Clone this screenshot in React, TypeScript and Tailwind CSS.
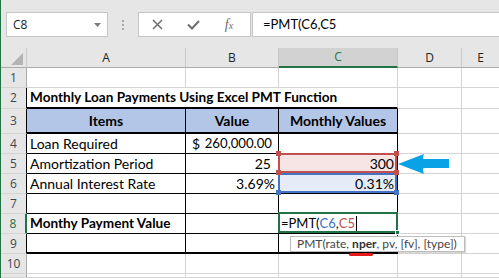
import React from "react";

type CP = { w: string; cls?: string; children?: React.ReactNode };
const Cell = ({ w, cls = "", children }: CP) => (
  <div className={`${w} shrink-0 h-full flex items-center overflow-visible whitespace-nowrap relative ${cls}`}>{children}</div>
);

const GRID = "border-r border-b border-r-[#d4d4d4] border-b-[#d4d4d4]";
const TBL = "border-r border-b border-r-black border-b-black";
const TBL2 = "border-r border-b-2 border-r-black border-b-black";

const RH = ({ n, cls = "" }: { n: string; cls?: string }) => (
  <div
    className={`w-[26px] shrink-0 h-full flex items-center justify-center bg-[#e6e6e6] border-b border-b-[#d4d4d4] font-['Open_Sans',sans-serif] text-[12px] ${cls}`}
  >
    {n}
  </div>
);

const RHN = "border-r border-r-[#ababab] text-[#3f4650]";
const RHT = "border-r border-r-black text-[#3f4650]";

const DE = () => (
  <>
    <Cell w="w-[64px]" cls={GRID} />
    <Cell w="flex-1" cls="border-b border-b-[#d4d4d4]" />
  </>
);

export default function App() {
  return (
    <div className="relative w-[499px] h-[278px] overflow-hidden bg-white border-l border-l-[#217346] flex flex-col font-['Lato',sans-serif] text-[14px] text-black">
      {/* toolbar */}
      <div className="h-[48px] shrink-0 bg-[#e6e6e6] flex items-start pt-[12px] pl-[5px]">
        <div className="w-[102px] h-[25px] shrink-0 bg-white border border-[#c6c6c6] flex items-center justify-between pl-[6px] pr-[6px]">
          <span className="font-['Open_Sans',sans-serif] text-[12px] text-[#222]">C8</span>
          <svg width="7" height="4" viewBox="0 0 7 4">
            <path d="M0 0H7L3.5 4Z" fill="#7a7a7a" />
          </svg>
        </div>
        <div className="w-[30px] h-[25px] shrink-0 flex flex-col items-center justify-center gap-[2px]">
          <div className="w-[2px] h-[2px] bg-[#a8a8a8]" />
          <div className="w-[2px] h-[2px] bg-[#a8a8a8]" />
          <div className="w-[2px] h-[2px] bg-[#a8a8a8]" />
        </div>
        <div className="w-[113px] h-[25px] shrink-0 bg-white border border-[#c6c6c6] flex items-center">
          <div className="w-[36px] flex justify-center">
            <svg width="11" height="11" viewBox="0 0 11 11">
              <path d="M1 1L10 10M10 1L1 10" stroke="#6e6e6e" strokeWidth="1.5" />
            </svg>
          </div>
          <div className="w-[36px] flex justify-center">
            <svg width="13" height="10" viewBox="0 0 13 10">
              <path d="M1 4.5L5 8.5L12 1" stroke="#6e6e6e" strokeWidth="2" fill="none" />
            </svg>
          </div>
          <div className="w-[36px] flex justify-center items-baseline font-['Liberation_Serif',serif] italic text-[#6e6e6e]">
            <span className="text-[14px]">f</span>
            <span className="text-[10px]">x</span>
          </div>
        </div>
        <div className="ml-[1px] flex-1 h-[25px] bg-white border border-[#c6c6c6] border-r-0 pl-[10px] flex items-center text-[13px] text-black">
          =PMT(C6,C5
        </div>
      </div>

      {/* column headers */}
      <div className="h-[20px] shrink-0 flex font-['Open_Sans',sans-serif] text-[12px] text-[#222]">
        <div className="w-[26px] shrink-0 h-full relative bg-[#e6e6e6] border-r border-b border-r-[#c8c8c8] border-b-[#ababab]">
          <svg className="absolute right-[3px] bottom-[2px]" width="12" height="12" viewBox="0 0 12 12">
            <path d="M12 0V12H0Z" fill="#b4b4b4" />
          </svg>
        </div>
        <div className="w-[159px] shrink-0 h-full flex items-center justify-center bg-[#e6e6e6] border-r border-b border-r-[#c8c8c8] border-b-[#ababab]">A</div>
        <div className="w-[93px] shrink-0 h-full flex items-center justify-center bg-[#e6e6e6] border-r border-b border-r-[#c8c8c8] border-b-[#ababab]">B</div>
        <div className="w-[119px] shrink-0 h-full flex items-center justify-center bg-[#d2d2d2] text-[#217346] border-r border-b-2 border-r-[#c8c8c8] border-b-[#217346]">C</div>
        <div className="w-[64px] shrink-0 h-full flex items-center justify-center bg-[#e6e6e6] border-r border-b border-r-[#c8c8c8] border-b-[#ababab]">D</div>
        <div className="flex-1 h-full flex items-center justify-center bg-[#e6e6e6] border-b border-b-[#ababab]">E</div>
      </div>

      {/* row 1 */}
      <div className="h-[20px] shrink-0 flex">
        <RH n="1" cls={RHN} />
        <Cell w="w-[159px]" cls={GRID} />
        <Cell w="w-[93px]" cls={GRID} />
        <Cell w="w-[119px]" cls={GRID} />
        <DE />
      </div>

      {/* row 2 */}
      <div className="h-[21px] shrink-0 flex">
        <RH n="2" cls={RHT} />
        <Cell w="w-[371px]" cls="border-r border-b-2 border-r-[#d4d4d4] border-b-black pl-[3px] font-bold text-[13.6px]">
          Monthly Loan Payments Using Excel PMT Function
        </Cell>
        <DE />
      </div>

      {/* row 3 */}
      <div className="h-[25px] shrink-0 flex">
        <RH n="3" cls={RHT} />
        <Cell w="w-[159px]" cls={`${TBL2} bg-[#b4c6e7] justify-center font-bold`}>Items</Cell>
        <Cell w="w-[93px]" cls={`${TBL2} bg-[#b4c6e7] justify-center font-bold`}>Value</Cell>
        <Cell w="w-[119px]" cls={`${TBL2} bg-[#b4c6e7] justify-center font-bold`}>Monthly Values</Cell>
        <DE />
      </div>

      {/* row 4 */}
      <div className="h-[20px] shrink-0 flex">
        <RH n="4" cls={RHT} />
        <Cell w="w-[159px]" cls={`${TBL} pl-[3px]`}>Loan Required</Cell>
        <Cell w="w-[93px]" cls={`${TBL} justify-between pl-[6px] pr-[6px]`}>
          <span>$</span>
          <span className="text-[13.2px]">260,000.00</span>
        </Cell>
        <Cell w="w-[119px]" cls={TBL} />
        <DE />
      </div>

      {/* row 5 */}
      <div className="h-[20px] shrink-0 flex">
        <RH n="5" cls={RHT} />
        <Cell w="w-[159px]" cls={`${TBL} pl-[3px]`}>Amortization Period</Cell>
        <Cell w="w-[93px]" cls={`${TBL} justify-end pr-[7px]`}>25</Cell>
        <Cell w="w-[119px]" cls={`${TBL} justify-end pr-[3px] bg-[#f7e4e4]`}>
          <span className="relative z-20">300</span>
          <div className="absolute -left-[1px] -top-[1px] right-0 bottom-0 border-2 border-[#c0504d] z-10">
            <div className="absolute -left-[4px] -top-[4px] w-[5px] h-[5px] bg-[#c0504d]" />
            <div className="absolute -right-[4px] -top-[4px] w-[5px] h-[5px] bg-[#c0504d]" />
            <div className="absolute -left-[4px] -bottom-[4px] w-[5px] h-[5px] bg-[#c0504d]" />
            <div className="absolute -right-[4px] -bottom-[4px] w-[5px] h-[5px] bg-[#c0504d]" />
          </div>
        </Cell>
        <DE />
      </div>

      {/* row 6 */}
      <div className="h-[20px] shrink-0 flex">
        <RH n="6" cls={RHT} />
        <Cell w="w-[159px]" cls={`${TBL} pl-[3px]`}>Annual Interest Rate</Cell>
        <Cell w="w-[93px]" cls={`${TBL} justify-end pr-[3px]`}>3.69%</Cell>
        <Cell w="w-[119px]" cls={`${TBL} justify-end pr-[3px] bg-[#e5ecf7]`}>
          <span className="relative z-20">0.31%</span>
          <div className="absolute -left-[1px] -top-[1px] right-0 bottom-0 border-2 border-[#4472c4] z-[5]">
            <div className="absolute -left-[4px] -bottom-[4px] w-[5px] h-[5px] bg-[#4472c4]" />
            <div className="absolute -right-[4px] -bottom-[4px] w-[5px] h-[5px] bg-[#4472c4]" />
          </div>
        </Cell>
        <DE />
      </div>

      {/* row 7 */}
      <div className="h-[20px] shrink-0 flex">
        <RH n="7" cls={RHT} />
        <Cell w="w-[159px]" cls={TBL} />
        <Cell w="w-[93px]" cls={TBL} />
        <Cell w="w-[119px]" cls={TBL} />
        <DE />
      </div>

      {/* row 8 */}
      <div className="h-[20px] shrink-0 flex">
        <RH n="8" cls="border-r-2 border-r-[#217346] bg-[#d2d2d2] text-[#217346]" />
        <Cell w="w-[159px]" cls={`${TBL} pl-[3px] font-bold text-[13.6px]`}>Monthy Payment Value</Cell>
        <Cell w="w-[93px]" cls={TBL} />
        <Cell w="w-[119px]" cls={`${TBL} pl-[2px] text-[13px]`}>
          <span>=PMT(</span>
          <span className="text-[#3a6fc4]">C6</span>
          <span>,</span>
          <span className="text-[#c0504d]">C5</span>
          <span className="ml-[1px] w-[1px] h-[15px] bg-black" />
          <div className="absolute -left-[1px] -top-[2px] -right-[1px] bottom-0 border-2 border-[#217346] z-10">
            <div className="absolute -right-[4px] -bottom-[4px] w-[5px] h-[5px] bg-[#217346] border border-white" />
          </div>
        </Cell>
        <DE />
      </div>

      {/* row 9 */}
      <div className="h-[20px] shrink-0 flex">
        <RH n="9" cls={RHT} />
        <Cell w="w-[159px]" cls={TBL2} />
        <Cell w="w-[93px]" cls={TBL2} />
        <Cell w="w-[119px]" cls={TBL2} />
        <DE />
      </div>

      {/* row 10 */}
      <div className="h-[20px] shrink-0 flex">
        <RH n="10" cls={RHN} />
        <Cell w="w-[159px]" cls={GRID} />
        <Cell w="w-[93px]" cls={GRID} />
        <Cell w="w-[119px]" cls={GRID} />
        <DE />
      </div>

      {/* row 11 */}
      <div className="flex-1 flex">
        <RH n="" cls={RHN} />
        <Cell w="w-[159px]" cls={GRID} />
        <Cell w="w-[93px]" cls={GRID} />
        <Cell w="w-[119px]" cls={GRID} />
        <DE />
      </div>

      {/* tooltip */}
      <div className="absolute left-[289px] top-[236px] w-[175px] h-[16px] bg-white border border-[#bcbcbc] shadow-[1px_1px_1px_rgba(0,0,0,0.15)] flex items-center pl-[6px] font-['Lato',sans-serif] text-[12px] text-[#444] whitespace-nowrap z-30">
        PMT(rate,&nbsp;<span className="font-bold text-[#333]">nper</span>, pv, [fv], [type])
      </div>
      <div className="absolute left-[348px] top-[253px] w-[24px] h-[3px] rounded-full bg-[#e51b1b] z-30" />

      {/* arrow */}
      <svg className="absolute left-[396px] top-[152px] z-30" width="54" height="24" viewBox="0 0 54 24">
        <path d="M1 12L27 2Q25 7 27 7H52V16H27Q25 16 27 22Z" fill="#0aa2e6" />
      </svg>
    </div>
  );
}
